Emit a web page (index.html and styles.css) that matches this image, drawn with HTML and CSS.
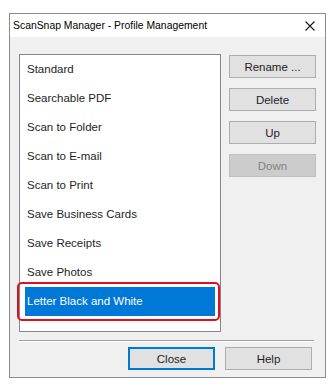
FILE: index.html
```html
<!DOCTYPE html>
<html>
<head>
<meta charset="utf-8">
<link rel="stylesheet" href="styles.css">
</head>
<body>
<div class="dialog">
  <div class="titlebar">
    <span class="title">ScanSnap Manager - Profile Management</span>
    <svg class="close-x" width="10" height="10" viewBox="0 0 10 10"><path d="M0.5 0.5 L9.5 9.5 M9.5 0.5 L0.5 9.5" stroke="#1a1a1a" stroke-width="1.1" fill="none"/></svg>
  </div>
  <div class="body">
    <div class="main">
      <div class="list">
        <div class="item">Standard</div>
        <div class="item">Searchable PDF</div>
        <div class="item">Scan to Folder</div>
        <div class="item">Scan to E-mail</div>
        <div class="item">Scan to Print</div>
        <div class="item">Save Business Cards</div>
        <div class="item">Save Receipts</div>
        <div class="item">Save Photos</div>
        <div class="item selected">Letter Black and White<span class="highlight"></span></div>
      </div>
      <div class="side">
        <button class="btn">Rename ...</button>
        <button class="btn">Delete</button>
        <button class="btn">Up</button>
        <button class="btn disabled">Down</button>
      </div>
    </div>
    <div class="sep"></div>
    <div class="footer">
      <button class="btn default">Close</button>
      <button class="btn">Help</button>
    </div>
  </div>
</div>
</body>
</html>
```
FILE: styles.css
```css
html, body {
  margin: 0;
  padding: 0;
  background: #ffffff;
}
body {
  font-family: "Liberation Sans", Arial, sans-serif;
  font-size: 11.5px;
  color: #1e1e1e;
}
.dialog {
  margin: 13px 0 0 9px;
  width: 315px;
  height: 363px;
  border: 1px solid #8c8c8c;
  display: flex;
  flex-direction: column;
}
.titlebar {
  height: 23px;
  background: #ffffff;
  display: flex;
  align-items: center;
  justify-content: space-between;
  padding: 0 10px 0 3px;
  flex: none;
}
.title {
  font-size: 10.4px;
  color: #000;
}
.close-x {
  display: block;
}
.body {
  flex: 1;
  background: #f0f0f0;
  padding: 17px 9px 0 9px;
  display: flex;
  flex-direction: column;
}
.main {
  display: flex;
  gap: 8px;
}
.list {
  width: 200px;
  height: 276px;
  background: #ffffff;
  border: 1px solid #828790;
  flex: none;
}
.item {
  position: relative;
  height: 29px;
  line-height: 29px;
  margin: 0 5px;
  padding-left: 2px;
  white-space: nowrap;
}
.item.selected {
  background: #0078d7;
  color: #ffffff;
}
.highlight {
  position: absolute;
  left: -8px;
  right: -5px;
  top: -5px;
  bottom: -5px;
  border: 2px solid #e0101c;
  border-radius: 5px;
}
.side {
  display: flex;
  flex-direction: column;
  gap: 10px;
  padding-top: 1px;
}
.btn {
  width: 87px;
  height: 23px;
  padding: 0;
  margin: 0;
  font-family: "Liberation Sans", Arial, sans-serif;
  font-size: 11.5px;
  color: #1e1e1e;
  background: #e1e1e1;
  border: 1px solid #adadad;
  border-radius: 0;
}
.btn.disabled {
  background: #cccccc;
  border-color: #bfbfbf;
  color: #838383;
}
.btn.default {
  border: 2px solid #0078d7;
}
.sep {
  margin-top: 8px;
  margin-right: 2px;
  height: 1px;
  background: #a0a0a0;
  border-bottom: 1px solid #ffffff;
}
.footer {
  display: flex;
  justify-content: flex-end;
  gap: 10px;
  padding: 5px 4px 0 0;
}
```
